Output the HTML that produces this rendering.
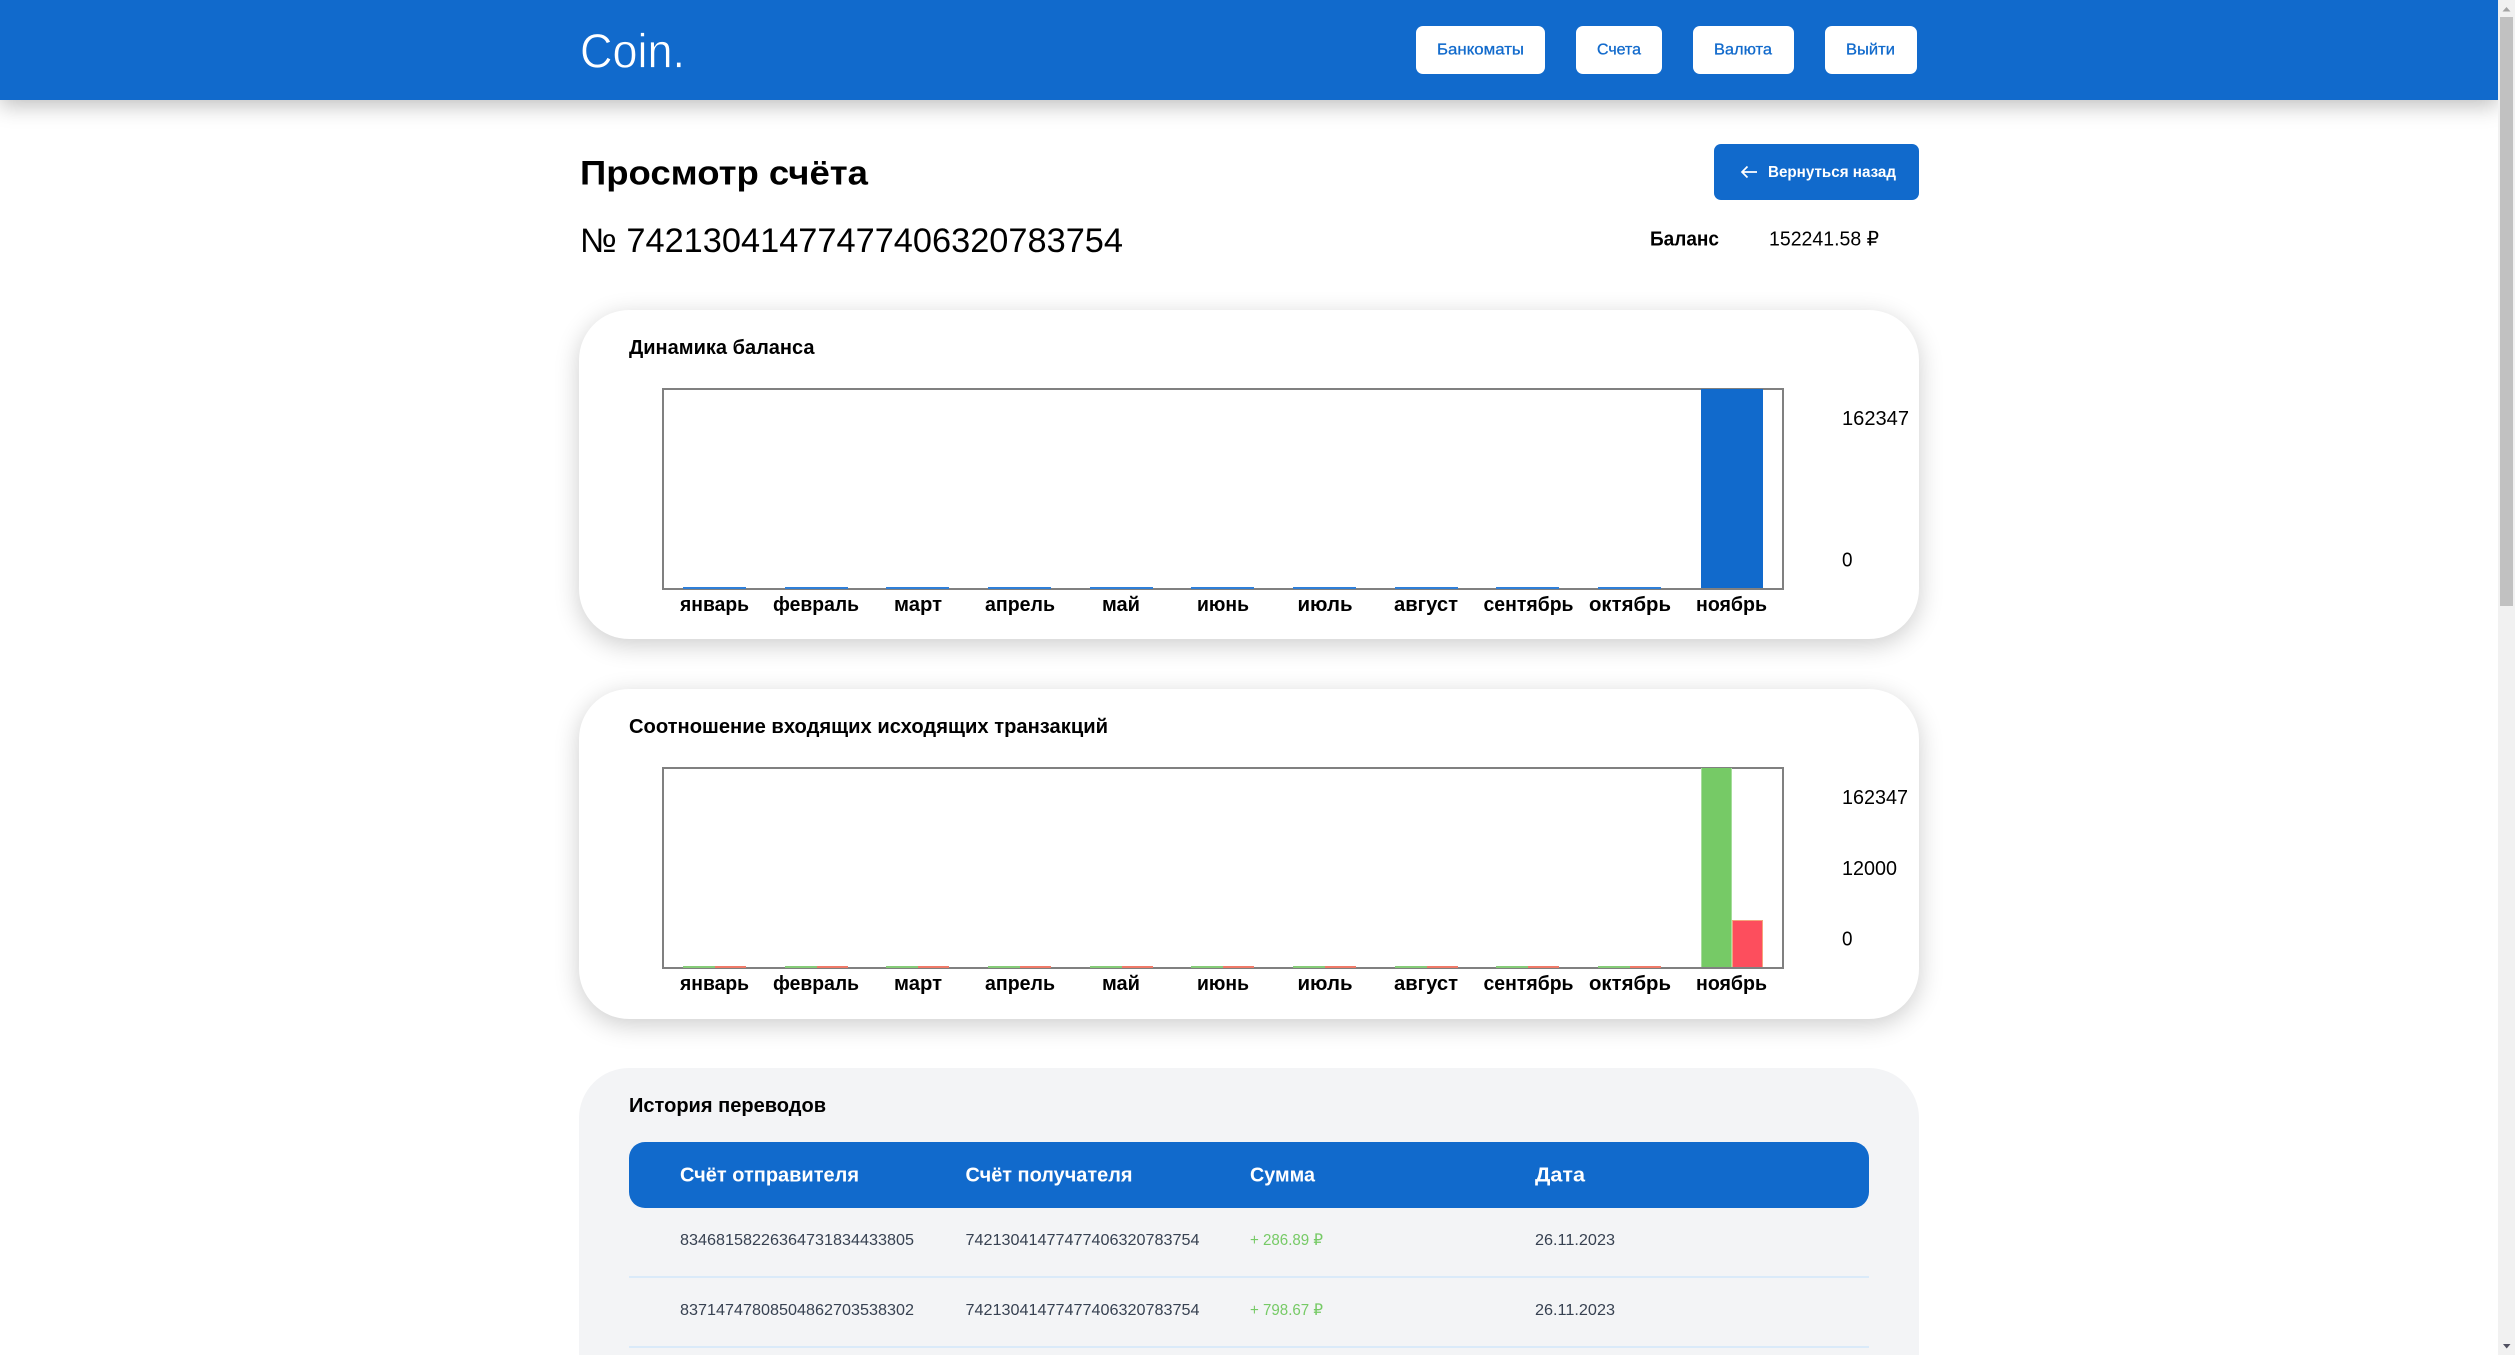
<!DOCTYPE html>
<html lang="ru">
<head>
<meta charset="utf-8">
<title>Coin.</title>
<style>
html,body{margin:0;padding:0;width:2515px;height:1355px;overflow:hidden;background:#fff;font-family:"Liberation Sans",sans-serif}
.a{position:absolute;box-sizing:border-box}
header{position:absolute;left:0;top:0;width:2498px;height:100px;background:#116acc;box-shadow:0 6px 20px rgba(0,0,0,.25)}
.btn{position:absolute;top:26px;height:48px;background:#fff;border-radius:7px}
.card{position:absolute;left:579px;width:1340px;height:330px;background:#fff;border-radius:50px;box-shadow:0 6px 25px rgba(0,0,0,.2)}
.chart{position:absolute;left:662px;width:1122px;height:202px;border:2px solid #808080;box-sizing:border-box}
.b{position:absolute;background:#2f7fd8;height:2px;width:63px}
.g{position:absolute;background:#86cc78;height:2px;width:31.5px}
.r{position:absolute;background:#ef7a68;height:2px;width:31.5px}
#ov{position:absolute;left:0;top:0}
text{font-family:"Liberation Sans",sans-serif}
.f20b{font-size:20px;font-weight:700;fill:#000}
.f20{font-size:20px;fill:#000}
.nav{font-size:16px;fill:#116acc;font-weight:400;stroke:#116acc;stroke-width:.3px}
.th{font-size:20px;font-weight:700;fill:#fff}
.td{font-size:16px;fill:#374151}
.pos{font-size:16px;fill:#76ca66}
</style>
</head>
<body>
<header></header>
<div class="btn" style="left:1416px;width:129px"></div>
<div class="btn" style="left:1576px;width:86px"></div>
<div class="btn" style="left:1693px;width:101px"></div>
<div class="btn" style="left:1825px;width:92px"></div>
<div class="a" style="left:1714px;top:144px;width:205px;height:56px;background:#116acc;border-radius:7px"></div>

<section class="card" style="top:309.5px;height:329.5px"></section>
<div class="chart" style="top:388px"></div>
<div class="b" style="left:683px;top:587px"></div>
<div class="b" style="left:785px;top:587px"></div>
<div class="b" style="left:886px;top:587px"></div>
<div class="b" style="left:988px;top:587px"></div>
<div class="b" style="left:1090px;top:587px"></div>
<div class="b" style="left:1191px;top:587px"></div>
<div class="b" style="left:1293px;top:587px"></div>
<div class="b" style="left:1395px;top:587px"></div>
<div class="b" style="left:1496px;top:587px"></div>
<div class="b" style="left:1598px;top:587px"></div>
<div class="a" style="left:1700.5px;top:389px;width:62px;height:199px;background:#116acc"></div>

<section class="card" style="top:689px;height:329.5px"></section>
<div class="chart" style="top:767px"></div>
<div class="g" style="left:683px;top:966px"></div><div class="r" style="left:714.5px;top:966px"></div>
<div class="g" style="left:785px;top:966px"></div><div class="r" style="left:816.5px;top:966px"></div>
<div class="g" style="left:886px;top:966px"></div><div class="r" style="left:917.5px;top:966px"></div>
<div class="g" style="left:988px;top:966px"></div><div class="r" style="left:1019.5px;top:966px"></div>
<div class="g" style="left:1090px;top:966px"></div><div class="r" style="left:1121.5px;top:966px"></div>
<div class="g" style="left:1191px;top:966px"></div><div class="r" style="left:1222.5px;top:966px"></div>
<div class="g" style="left:1293px;top:966px"></div><div class="r" style="left:1324.5px;top:966px"></div>
<div class="g" style="left:1395px;top:966px"></div><div class="r" style="left:1426.5px;top:966px"></div>
<div class="g" style="left:1496px;top:966px"></div><div class="r" style="left:1527.5px;top:966px"></div>
<div class="g" style="left:1598px;top:966px"></div><div class="r" style="left:1629.5px;top:966px"></div>
<div class="a" style="left:1700.5px;top:768px;width:31px;height:199px;background:#76ca66;border-left:1px solid #a6dc9b;border-right:1px solid #a6dc9b"></div>
<div class="a" style="left:1731.5px;top:920px;width:31.5px;height:47px;background:#fd4e5d;border:1px solid #f4a57c;border-bottom:0"></div>

<section class="a" style="left:579px;top:1068px;width:1340px;height:287px;background:#f3f4f6;border-radius:50px 50px 0 0"></section>
<div class="a" style="left:629px;top:1142px;width:1240px;height:66px;background:#116acc;border-radius:16px"></div>
<div class="a" style="left:629px;top:1276px;width:1240px;height:2px;background:#daeaf9"></div>
<div class="a" style="left:629px;top:1346px;width:1240px;height:2px;background:#daeaf9"></div>

<div class="a" style="left:2498px;top:0;width:17px;height:1355px;background:#f1f1f1"></div>
<div class="a" style="left:2500px;top:17px;width:13px;height:589px;background:#c1c1c1"></div>

<svg id="ov" width="2515" height="1355" viewBox="0 0 2515 1355" xmlns="http://www.w3.org/2000/svg">
<polygon points="2506.5,7 2510.5,11.5 2502.5,11.5" fill="#a3a3a3"/>
<polygon points="2503,1344 2510.5,1344 2506.7,1348.5" fill="#505061"/>
<text x="580" y="67.5" font-size="48" fill="#fff" stroke="#116acc" stroke-width=".7" textLength="105" lengthAdjust="spacingAndGlyphs">Coin.</text>
<text class="nav" x="1437" y="54.5" textLength="87" lengthAdjust="spacingAndGlyphs">Банкоматы</text>
<text class="nav" x="1597" y="54.5" textLength="44" lengthAdjust="spacingAndGlyphs">Счета</text>
<text class="nav" x="1714" y="54.5" textLength="58" lengthAdjust="spacingAndGlyphs">Валюта</text>
<text class="nav" x="1846" y="54.5" textLength="49" lengthAdjust="spacingAndGlyphs">Выйти</text>
<text x="580" y="184.5" font-size="34" font-weight="700" fill="#000" textLength="288" lengthAdjust="spacingAndGlyphs">Просмотр счёта</text>
<path d="M1757 172H1742M1747.5 166.5L1742 172L1747.5 177.5" fill="none" stroke="#fff" stroke-width="1.7"/>
<text x="1768" y="177" font-size="16" font-weight="700" fill="#fff" textLength="128" lengthAdjust="spacingAndGlyphs">Вернуться назад</text>
<text x="580" y="252" font-size="34" fill="#000" textLength="543" lengthAdjust="spacingAndGlyphs">№ 74213041477477406320783754</text>
<text class="f20b" x="1650" y="245.5" textLength="69" lengthAdjust="spacingAndGlyphs">Баланс</text>
<text class="f20" x="1769" y="245.5" textLength="110" lengthAdjust="spacingAndGlyphs">152241.58 ₽</text>

<text class="f20b" x="629" y="354" textLength="185.5" lengthAdjust="spacingAndGlyphs">Динамика баланса</text>
<text class="f20" x="1842" y="425" textLength="67" lengthAdjust="spacingAndGlyphs">162347</text>
<text class="f20" x="1842" y="566.5" textLength="10.5" lengthAdjust="spacingAndGlyphs">0</text>
<g>
<text class="f20b" x="680" y="611" textLength="69" lengthAdjust="spacingAndGlyphs">январь</text>
<text class="f20b" x="773" y="611" textLength="86" lengthAdjust="spacingAndGlyphs">февраль</text>
<text class="f20b" x="894" y="611" textLength="48" lengthAdjust="spacingAndGlyphs">март</text>
<text class="f20b" x="985" y="611" textLength="70" lengthAdjust="spacingAndGlyphs">апрель</text>
<text class="f20b" x="1102" y="611" textLength="38" lengthAdjust="spacingAndGlyphs">май</text>
<text class="f20b" x="1197" y="611" textLength="52" lengthAdjust="spacingAndGlyphs">июнь</text>
<text class="f20b" x="1297.5" y="611" textLength="55" lengthAdjust="spacingAndGlyphs">июль</text>
<text class="f20b" x="1394" y="611" textLength="64" lengthAdjust="spacingAndGlyphs">август</text>
<text class="f20b" x="1483.5" y="611" textLength="90" lengthAdjust="spacingAndGlyphs">сентябрь</text>
<text class="f20b" x="1589" y="611" textLength="82" lengthAdjust="spacingAndGlyphs">октябрь</text>
<text class="f20b" x="1696" y="611" textLength="71" lengthAdjust="spacingAndGlyphs">ноябрь</text>
</g>

<text class="f20b" x="629" y="733" textLength="479" lengthAdjust="spacingAndGlyphs">Соотношение входящих исходящих транзакций</text>
<text class="f20" x="1842" y="804" textLength="66" lengthAdjust="spacingAndGlyphs">162347</text>
<text class="f20" x="1842" y="875" textLength="55" lengthAdjust="spacingAndGlyphs">12000</text>
<text class="f20" x="1842" y="945.5" textLength="10.5" lengthAdjust="spacingAndGlyphs">0</text>
<g>
<text class="f20b" x="680" y="990" textLength="69" lengthAdjust="spacingAndGlyphs">январь</text>
<text class="f20b" x="773" y="990" textLength="86" lengthAdjust="spacingAndGlyphs">февраль</text>
<text class="f20b" x="894" y="990" textLength="48" lengthAdjust="spacingAndGlyphs">март</text>
<text class="f20b" x="985" y="990" textLength="70" lengthAdjust="spacingAndGlyphs">апрель</text>
<text class="f20b" x="1102" y="990" textLength="38" lengthAdjust="spacingAndGlyphs">май</text>
<text class="f20b" x="1197" y="990" textLength="52" lengthAdjust="spacingAndGlyphs">июнь</text>
<text class="f20b" x="1297.5" y="990" textLength="55" lengthAdjust="spacingAndGlyphs">июль</text>
<text class="f20b" x="1394" y="990" textLength="64" lengthAdjust="spacingAndGlyphs">август</text>
<text class="f20b" x="1483.5" y="990" textLength="90" lengthAdjust="spacingAndGlyphs">сентябрь</text>
<text class="f20b" x="1589" y="990" textLength="82" lengthAdjust="spacingAndGlyphs">октябрь</text>
<text class="f20b" x="1696" y="990" textLength="71" lengthAdjust="spacingAndGlyphs">ноябрь</text>
</g>

<text class="f20b" x="629" y="1112" textLength="197" lengthAdjust="spacingAndGlyphs">История переводов</text>
<text class="th" x="680" y="1181.5" textLength="179" lengthAdjust="spacingAndGlyphs">Счёт отправителя</text>
<text class="th" x="965.5" y="1181.5" textLength="167" lengthAdjust="spacingAndGlyphs">Счёт получателя</text>
<text class="th" x="1250" y="1181.5" textLength="65" lengthAdjust="spacingAndGlyphs">Сумма</text>
<text class="th" x="1535" y="1181.5" textLength="50" lengthAdjust="spacingAndGlyphs">Дата</text>

<text class="td" x="680" y="1245" textLength="234" lengthAdjust="spacingAndGlyphs">83468158226364731834433805</text>
<text class="td" x="965.5" y="1245" textLength="234" lengthAdjust="spacingAndGlyphs">74213041477477406320783754</text>
<text class="pos" x="1250" y="1245" textLength="73" lengthAdjust="spacingAndGlyphs">+ 286.89 ₽</text>
<text class="td" x="1535" y="1245" textLength="80" lengthAdjust="spacingAndGlyphs">26.11.2023</text>

<text class="td" x="680" y="1315" textLength="234" lengthAdjust="spacingAndGlyphs">83714747808504862703538302</text>
<text class="td" x="965.5" y="1315" textLength="234" lengthAdjust="spacingAndGlyphs">74213041477477406320783754</text>
<text class="pos" x="1250" y="1315" textLength="73" lengthAdjust="spacingAndGlyphs">+ 798.67 ₽</text>
<text class="td" x="1535" y="1315" textLength="80" lengthAdjust="spacingAndGlyphs">26.11.2023</text>
</svg>
</body>
</html>
